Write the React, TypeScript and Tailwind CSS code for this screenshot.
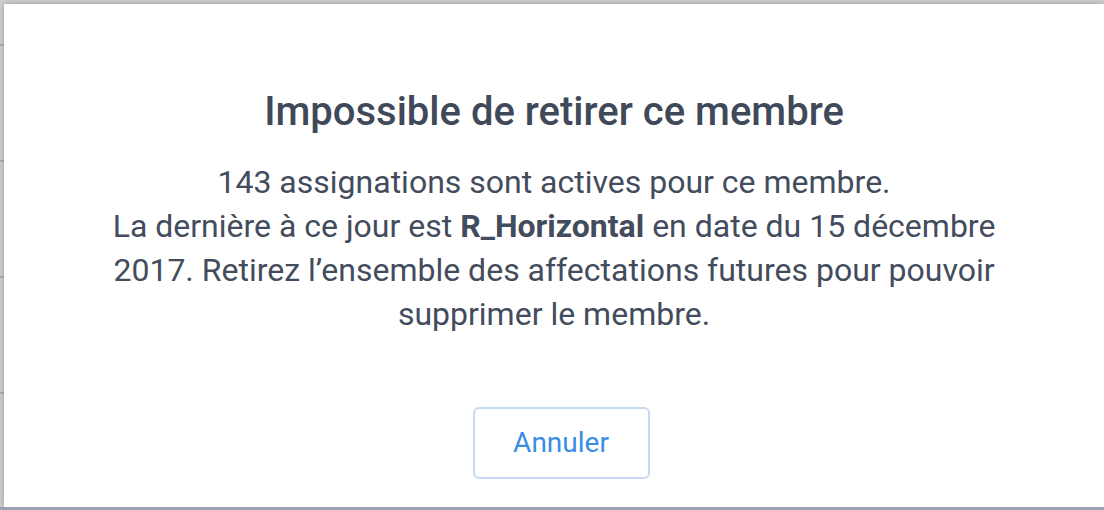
import React from "react";

function StripLine() {
  return <div className="h-[2px] w-full bg-[#aab2c8]" />;
}

export default function App() {
  return (
    <div
      className="w-[1104px] h-[510px] overflow-hidden bg-[#cfcfcf] flex flex-col pt-[4px]"
      style={{ fontFamily: "Roboto, 'Noto Sans', sans-serif" }}
    >
      <div className="flex flex-row">
        <div className="w-[4px] flex flex-col pt-[40px] gap-[114px]">
          <StripLine />
          <StripLine />
          <StripLine />
          <StripLine />
        </div>
        <div className="w-[1100px] h-[503px] bg-white shadow-[0_0_6px_rgba(0,0,0,0.25)] flex flex-col items-center">
          <h1 className="mt-[84px] text-[40px] leading-[48px] font-medium text-[#404959]">
            Impossible de retirer ce membre
          </h1>
          <p className="mt-[24px] w-[910px] text-center text-[32px] leading-[44px] text-[#434c5c]">
            143 assignations sont actives pour ce membre.
            <br />
            La dernière à ce jour est <b className="font-bold">R_Horizontal</b> en date du 15 décembre 2017. Retirez l’ensemble des affectations futures pour pouvoir supprimer le membre.
          </p>
          <button className="mt-[71px] ml-[14px] w-[177px] h-[72px] rounded-[6px] border-2 border-[#c8d7f2] bg-white text-[28px] text-[#3a8de3]">
            Annuler
          </button>
        </div>
      </div>
      <div className="mt-auto h-[3px] w-full bg-[#9aa1b0]" />
    </div>
  );
}
